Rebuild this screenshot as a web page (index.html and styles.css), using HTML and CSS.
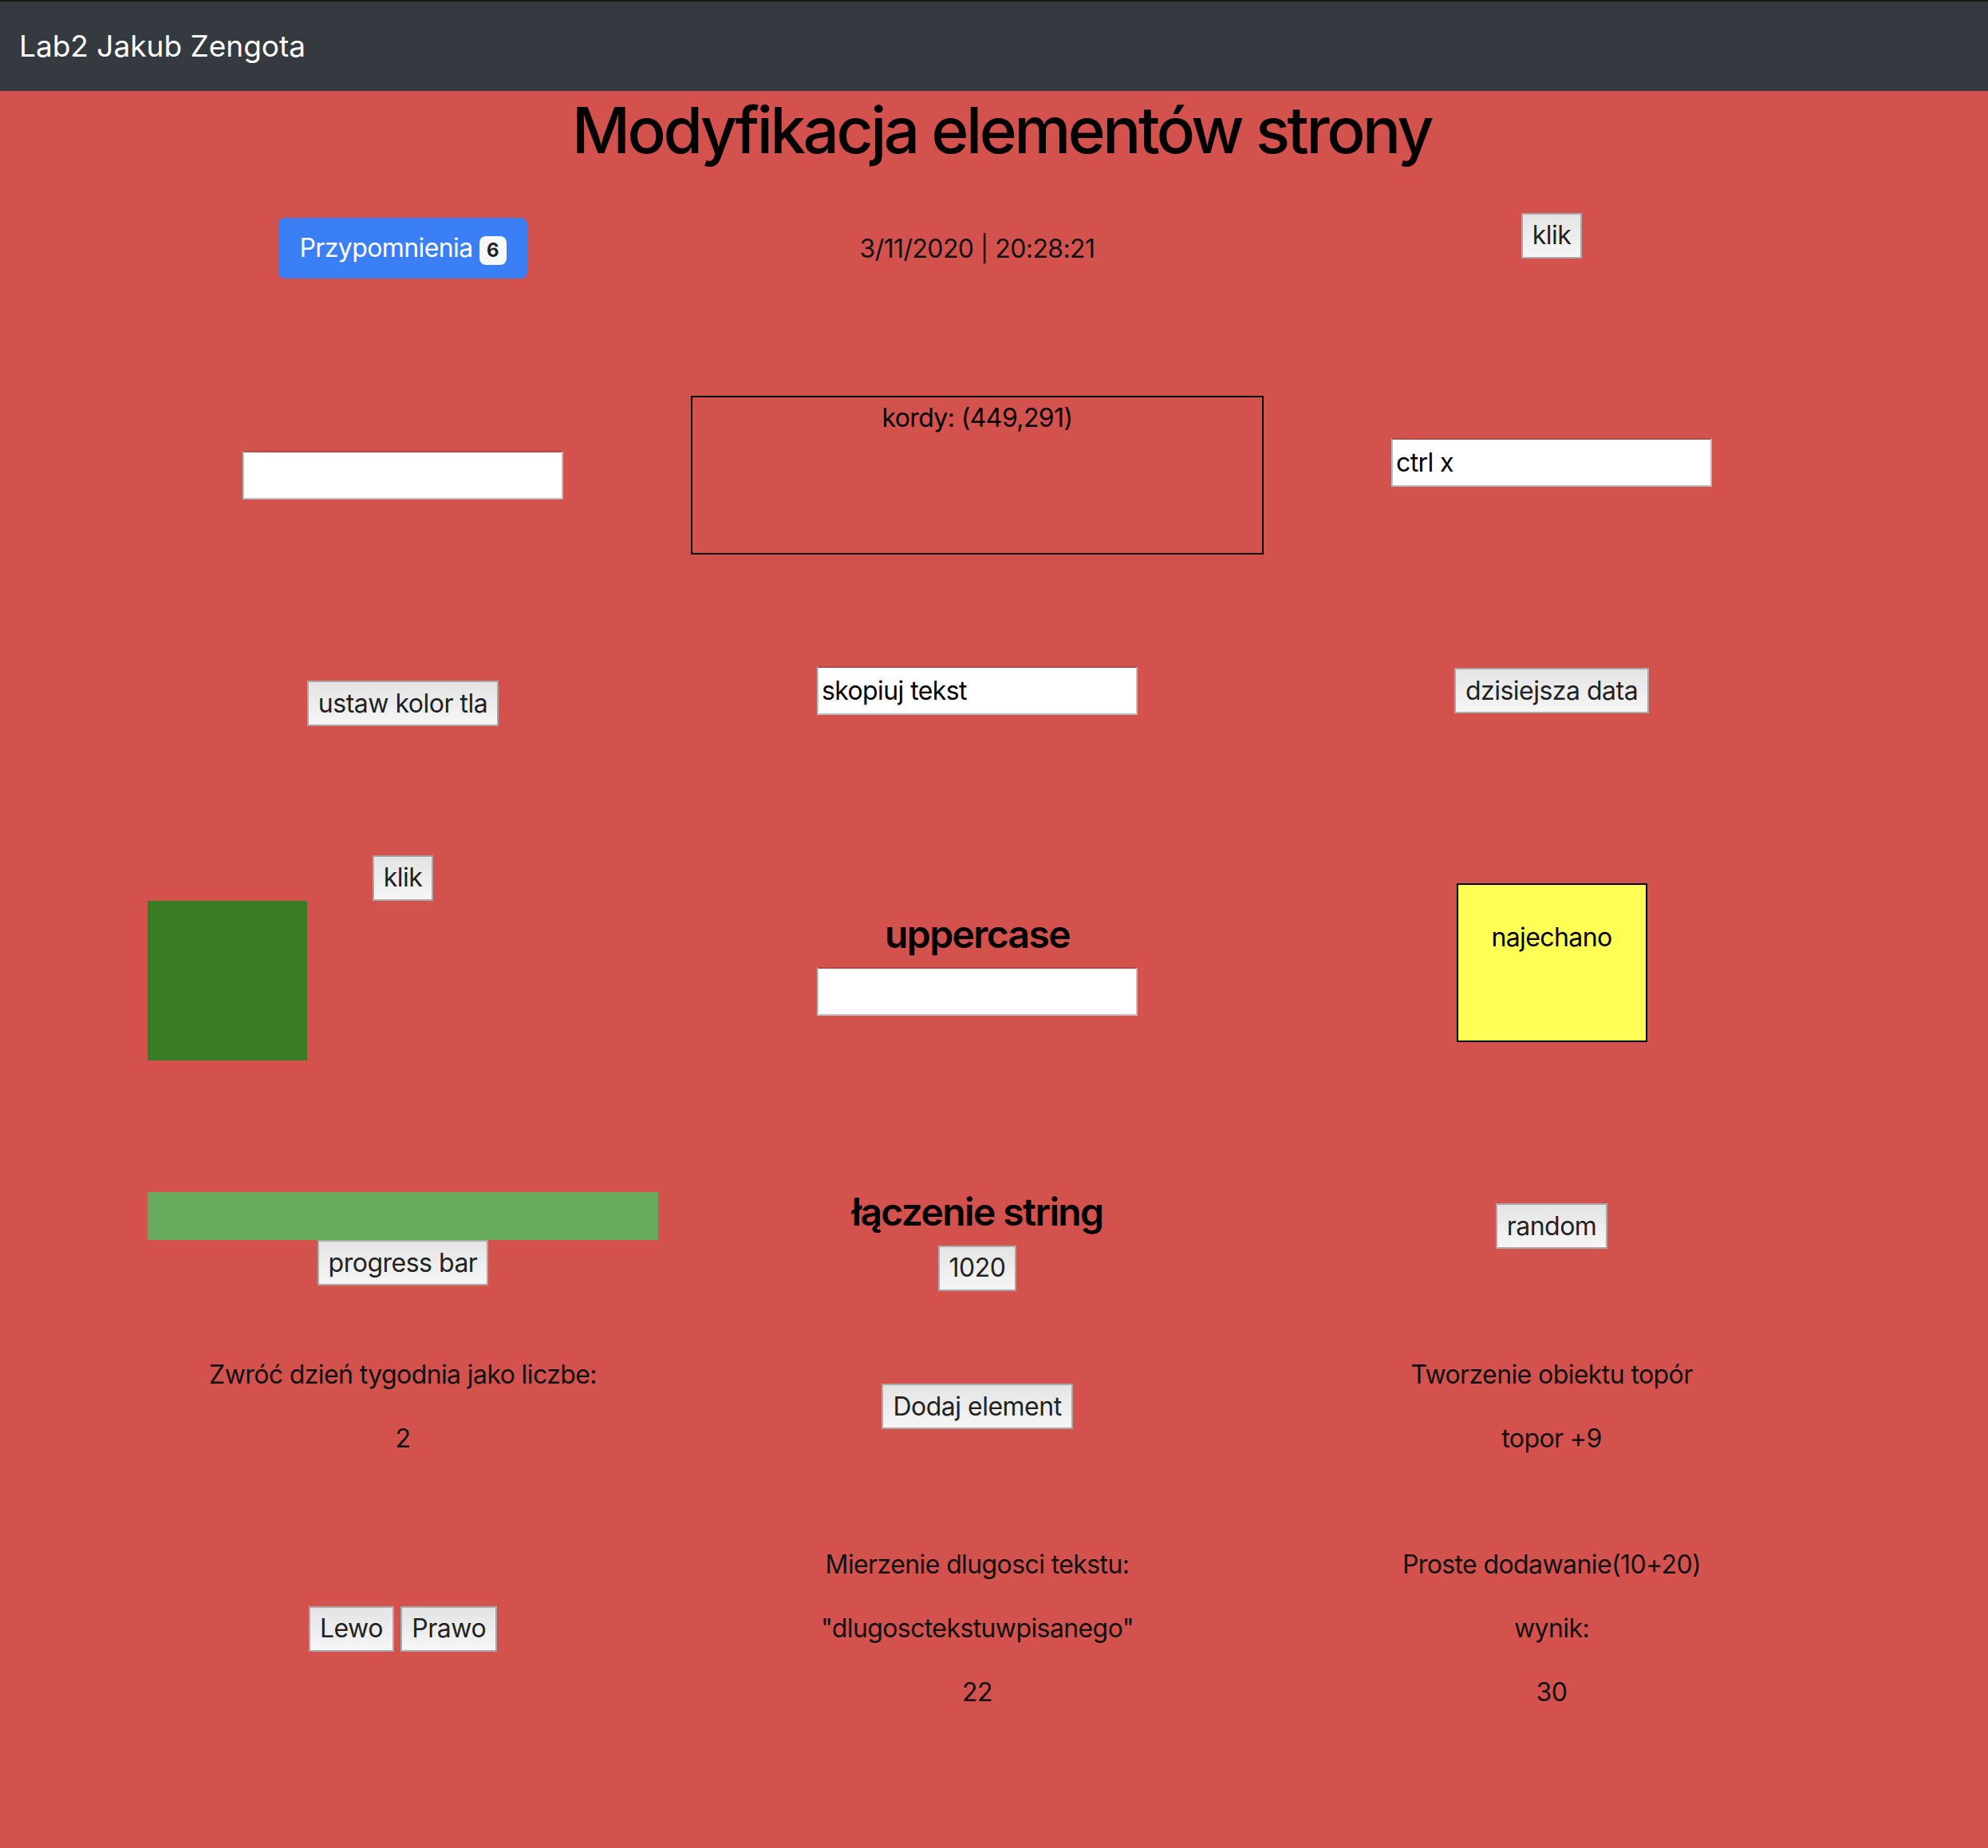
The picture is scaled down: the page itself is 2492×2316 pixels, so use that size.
FILE: index.html
```html
<!DOCTYPE html>
<html lang="pl">
<head>
<meta charset="utf-8">
<title>Lab2 Jakub Zengota</title>
<link rel="stylesheet" href="styles.css">
</head>
<body>
<nav class="navbar"><span class="brand">Lab2 Jakub Zengota</span></nav>
<h1 class="title">Modyfikacja elementów strony</h1>
<main class="board">
  <section class="row r1">
    <div class="cell"><button class="btn-primary">Przypomnienia <span class="badge">6</span></button></div>
    <div class="cell"><span class="date">3/11/2020 | 20:28:21</span></div>
    <div class="cell"><p class="para"><button class="btn">klik</button></p></div>
  </section>
  <section class="row r2">
    <div class="cell"><input class="field" type="text"></div>
    <div class="cell"><div class="kordy">kordy: (449,291)</div></div>
    <div class="cell"><p class="para"><input class="field" type="text" value="ctrl x"></p></div>
  </section>
  <section class="row r3">
    <div class="cell"><button class="btn">ustaw kolor tla</button></div>
    <div class="cell"><p class="para"><input class="field" type="text" value="skopiuj tekst"></p></div>
    <div class="cell"><p class="para"><button class="btn">dzisiejsza data</button></p></div>
  </section>
  <section class="row r4">
    <div class="cell cell-left">
      <div class="center"><button class="btn">klik</button></div>
      <div class="square"></div>
    </div>
    <div class="cell">
      <h4 class="sub">uppercase</h4>
      <input class="field" type="text">
    </div>
    <div class="cell"><div class="hover-box">najechano</div></div>
  </section>
  <section class="row r5">
    <div class="cell cell-left">
      <div class="progress"></div>
      <div class="center"><button class="btn">progress bar</button></div>
    </div>
    <div class="cell">
      <h4 class="sub">łączenie string</h4>
      <button class="btn">1020</button>
    </div>
    <div class="cell"><p class="para"><button class="btn">random</button></p></div>
  </section>
  <section class="row r6">
    <div class="cell"><p class="para">Zwróć dzień tygodnia jako liczbe:</p><p class="para">2</p></div>
    <div class="cell"><p class="para"><button class="btn">Dodaj element</button></p></div>
    <div class="cell"><p class="para">Tworzenie obiektu topór</p><p class="para">topor +9</p></div>
  </section>
  <section class="row r7">
    <div class="cell"><p class="para"><button class="btn">Lewo</button> <button class="btn">Prawo</button></p></div>
    <div class="cell"><p class="para">Mierzenie dlugosci tekstu:</p><p class="para">"dlugosctekstuwpisanego"</p><p class="para">22</p></div>
    <div class="cell"><p class="para">Proste dodawanie(10+20)</p><p class="para">wynik:</p><p class="para">30</p></div>
  </section>
</main>
</body>
</html>
```
FILE: styles.css
```css
html, body {
  margin: 0;
  padding: 0;
}
body {
  background: #d3524d;
  color: #111;
  font-family: Inter, "Noto Sans", "Liberation Sans", sans-serif;
  font-size: 32px;
  line-height: 48px;
  letter-spacing: -0.6px;
  min-height: 2316px;
}
.navbar {
  height: 112px;
  border-top: 2px solid #16181a;
  background: #343a40;
  display: flex;
  align-items: center;
  padding-left: 24px;
}
.brand {
  color: #fff;
  font-size: 37px;
  line-height: 54px;
  letter-spacing: 0;
}
.title {
  margin: 1px 0 17px;
  padding-left: 19px;
  text-align: center;
  font-size: 80px;
  line-height: 96px;
  font-weight: 500;
  letter-spacing: -3.5px;
  color: #000;
}
.board {
  padding-left: 145px;
}
.row {
  display: grid;
  grid-template-columns: repeat(3, 720px);
  align-items: center;
}
.r1 { height: 166px; }
.r2 { height: 403px; }
.r3 { height: 169px; }
.r4 { height: 480px; }
.r5 { height: 213px; }
.r6 { height: 239px; }
.r7 { height: 318px; }
.cell {
  display: flex;
  flex-direction: column;
  align-items: center;
  text-align: center;
}
.cell-left {
  align-items: stretch;
}
.center {
  text-align: center;
}
.date {
  padding-top: 2px;
}
.para {
  margin: 0 0 32px;
}
.btn {
  font: inherit;
  font-size: 32px;
  line-height: 48px;
  letter-spacing: -0.5px;
  color: #222;
  margin: 0;
  padding: 2.5px 12px;
  border: 2px solid #a9a9a9;
  border-radius: 0;
  background: linear-gradient(#e4e4e4, #f6f6f6);
  vertical-align: baseline;
}
.btn-primary {
  font: inherit;
  font-size: 32px;
  line-height: 48px;
  letter-spacing: -0.6px;
  color: #fff;
  margin: 0;
  padding: 12px 24px;
  border: 2px solid #3b7ff6;
  border-radius: 8px;
  background: #3b7ff6;
}
.badge {
  display: inline-block;
  font-size: 24px;
  line-height: 1;
  font-weight: 700;
  letter-spacing: 0;
  padding: 6px 9px;
  border-radius: 8px;
  background: #f8f9fa;
  color: #212529;
  vertical-align: baseline;
}
.field {
  box-sizing: border-box;
  width: 402px;
  height: 61px;
  margin: 0;
  padding: 0 4px;
  font: inherit;
  font-size: 32px;
  letter-spacing: -0.6px;
  color: #000;
  background: #fff;
  border: 2px solid #bdbdbd;
  border-top-color: #b24a45;
  vertical-align: baseline;
}
.kordy {
  box-sizing: border-box;
  width: 718px;
  height: 199px;
  padding-top: 2px;
  border: 2px solid #000;
  color: #000;
}
.sub {
  margin: 0 0 13px;
  padding-top: 3px;
  font-size: 48px;
  line-height: 57.6px;
  font-weight: 600;
  letter-spacing: -1.6px;
  color: #000;
}
.hover-box {
  box-sizing: border-box;
  width: 239px;
  height: 199px;
  padding-top: 42px;
  border: 2px solid #000;
  background: #fefe54;
  color: #000;
}
.square {
  width: 200px;
  height: 200px;
  margin-left: 40px;
  margin-bottom: 12px;
  background: #387d23;
}
.progress {
  width: 640px;
  height: 60px;
  margin-left: 40px;
  background: #66ab5b;
}
```
